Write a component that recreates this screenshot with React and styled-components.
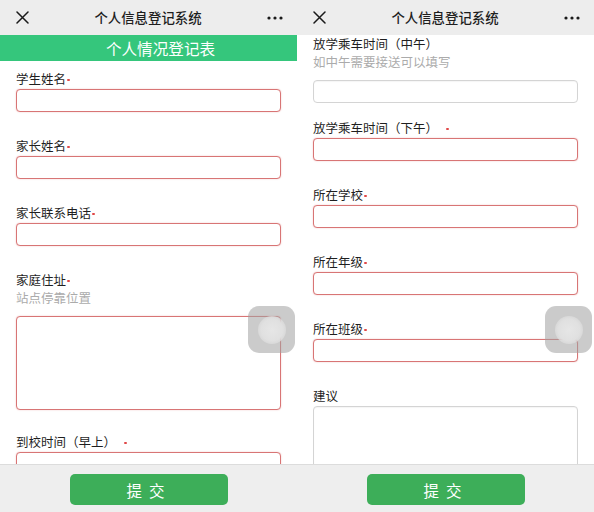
import React from 'react';
import styled, { createGlobalStyle } from 'styled-components';

const GlobalStyle = createGlobalStyle`
  html, body {
    margin: 0;
    padding: 0;
    background: #ffffff;
  }
  body {
    font-family: "Noto Sans CJK SC", "Noto Sans", sans-serif;
    color: #222;
  }
  * { box-sizing: border-box; }
`;

const Screen = styled.div`
  display: flex;
  width: 594px;
  height: 512px;
  overflow: hidden;
`;

const Phone = styled.div`
  position: relative;
  width: 297px;
  height: 512px;
  display: flex;
  flex-direction: column;
  background: #fff;
  overflow: hidden;
`;

const TopBar = styled.div`
  height: 35px;
  flex: 0 0 35px;
  background: #ededed;
  display: flex;
  align-items: center;
  justify-content: space-between;
  padding: 0 14px 0 16px;
`;

const Title = styled.div`
  font-size: 13.4px;
  font-weight: 500;
  color: #1e1e1e;
  line-height: 35px;
`;

const Body = styled.div`
  flex: 1;
  overflow: hidden;
`;

const Banner = styled.div`
  height: 26px;
  background: #35c67c;
  color: #fff;
  font-size: 15.6px;
  line-height: 26px;
  text-align: center;
  padding-left: 24px;
  margin-bottom: 9px;
`;

const Field = styled.div`
  padding: 0 16px;
  margin-bottom: ${p => p.$gap}px;
`;

const Label = styled.div`
  font-size: 12.5px;
  line-height: 18px;
  height: 18px;
  color: #1f1f1f;
  display: flex;
  align-items: center;
`;

const Dot = styled.span`
  display: inline-block;
  width: 2.5px;
  height: 2.5px;
  border-radius: 50%;
  background: #e04848;
  margin-left: ${p => (p.$spaced ? 8 : 1)}px;
  margin-top: 2px;
`;

const Hint = styled.div`
  font-size: 12.5px;
  line-height: 18px;
  color: #ababab;
  margin-bottom: 9px;
`;

const Input = styled.div`
  margin-top: ${p => (p.$hint ? 0 : 1)}px;
  height: ${p => p.$h}px;
  border-radius: 4px;
  border: 1px solid ${p => (p.$required ? '#d87575' : '#d4d4d4')};
  box-shadow: ${p =>
    p.$required
      ? '0 0 1.5px rgba(217, 100, 100, 0.45)'
      : 'inset 0 1px 1px rgba(0, 0, 0, 0.04)'};
  background: #fff;
`;

const Footer = styled.div`
  flex: 0 0 48px;
  height: 48px;
  background: #eeeeee;
  border-top: 1px solid #dcdcdc;
  display: flex;
  justify-content: center;
  padding-top: 9px;
`;

const SubmitButton = styled.button`
  width: 158px;
  height: 31px;
  border: none;
  border-radius: 5px;
  background: #3dae59;
  color: #fff;
  font-family: "Noto Sans CJK SC", sans-serif;
  font-size: 15.5px;
  letter-spacing: 7px;
  padding-left: 7px;
  line-height: 31px;
`;

const Floater = styled.div`
  position: absolute;
  top: 306px;
  right: 2px;
  width: 47px;
  height: 47px;
  border-radius: 11px;
  background: rgba(160, 160, 160, 0.55);
  display: flex;
  align-items: center;
  justify-content: center;
`;

const FloaterKnob = styled.div`
  width: 28px;
  height: 28px;
  border-radius: 50%;
  background: radial-gradient(circle, #e6e6e6 0%, #e0e0e0 55%, rgba(222, 222, 222, 0.6) 75%, rgba(200, 200, 200, 0) 100%);
`;

const CloseIcon = () => (
  <svg width="13" height="13" viewBox="0 0 13 13">
    <path d="M1 1 L12 12 M12 1 L1 12" stroke="#1a1a1a" strokeWidth="1.5" strokeLinecap="round" />
  </svg>
);

const MoreIcon = () => (
  <svg width="16" height="4" viewBox="0 0 16 4">
    <circle cx="2" cy="2" r="1.6" fill="#1a1a1a" />
    <circle cx="8" cy="2" r="1.6" fill="#1a1a1a" />
    <circle cx="14" cy="2" r="1.6" fill="#1a1a1a" />
  </svg>
);

const leftFields = [
  { label: '学生姓名', required: true },
  { label: '家长姓名', required: true },
  { label: '家长联系电话', required: true },
  { label: '家庭住址', required: true, hint: '站点停靠位置', h: 94, gap: 23 },
  { label: '到校时间（早上）', required: true, spaced: true },
];

const rightFields = [
  { label: '放学乘车时间（中午）', hint: '如中午需要接送可以填写', gap: 16 },
  { label: '放学乘车时间（下午）', required: true, spaced: true },
  { label: '所在学校', required: true },
  { label: '所在年级', required: true },
  { label: '所在班级', required: true },
  { label: '建议', h: 94 },
];

const FormField = ({ label, required, spaced, hint, h = 23, gap = 25 }) => (
  <Field $gap={gap}>
    <Label>
      {label}
      {required && <Dot $spaced={spaced} />}
    </Label>
    {hint && <Hint>{hint}</Hint>}
    <Input $h={h} $required={required} $hint={!!hint} />
  </Field>
);

const PhoneView = ({ banner, fields }) => (
  <Phone>
    <TopBar>
      <CloseIcon />
      <Title>个人信息登记系统</Title>
      <MoreIcon />
    </TopBar>
    <Body>
      {banner && <Banner>{banner}</Banner>}
      {fields.map(f => (
        <FormField key={f.label} {...f} />
      ))}
    </Body>
    <Footer>
      <SubmitButton>提交</SubmitButton>
    </Footer>
    <Floater>
      <FloaterKnob />
    </Floater>
  </Phone>
);

export default function App() {
  return (
    <>
      <GlobalStyle />
      <Screen>
        <PhoneView banner="个人情况登记表" fields={leftFields} />
        <PhoneView fields={rightFields} />
      </Screen>
    </>
  );
}
